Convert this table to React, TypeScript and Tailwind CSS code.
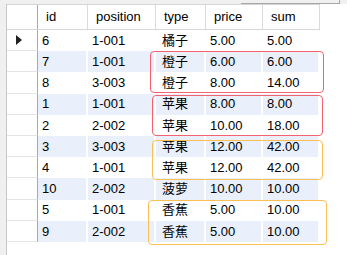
import React from "react";

const rows = [
  ["6", "1-001", "橘子", "5.00", "5.00"],
  ["7", "1-001", "橙子", "6.00", "6.00"],
  ["8", "3-003", "橙子", "8.00", "14.00"],
  ["1", "1-001", "苹果", "8.00", "8.00"],
  ["2", "2-002", "苹果", "10.00", "18.00"],
  ["3", "3-003", "苹果", "12.00", "42.00"],
  ["4", "1-001", "苹果", "12.00", "42.00"],
  ["10", "2-002", "菠萝", "10.00", "10.00"],
  ["5", "1-001", "香蕉", "5.00", "10.00"],
  ["9", "2-002", "香蕉", "5.00", "10.00"],
];

const widths = ["w-[50px]", "w-[68px]", "w-[50px]", "w-[57px]", "w-[57px]"];
const headers = ["id", "position", "type", "price", "sum"];

export default function App() {
  return (
    <div
      className="relative w-[347px] h-[255px] bg-white overflow-hidden text-[13px] text-black"
      style={{ fontFamily: '"Liberation Sans", "Noto Sans CJK SC", sans-serif' }}
    >
      <div className="flex h-[4px] bg-[#f0f0f0]">
        <div className="w-[241px]" />
        <div className="w-[99px] h-[4px] border-b border-r border-[#a8a8a8]" />
      </div>
      <div className="flex">
        <div className="w-[7px] h-[251px] bg-[#f0f0f0] border-r border-[#c8c8c8]" />
        <div className="flex flex-col">
          {/* header */}
          <div className="flex h-[26px] border-t border-b border-[#d6d6d6] bg-white">
            <div className="w-[31px] h-full border-r border-[#a8a8a8]" />
            {headers.map((h, i) => (
              <div
                key={h}
                className={`${widths[i]} h-full flex items-center pl-[8px] border-r border-[#dadada]`}
              >
                {h}
              </div>
            ))}
          </div>
          {rows.map((r, ri) => (
            <div key={ri} className="flex h-[21.2px]">
              <div className="w-[31px] h-full border-r border-[#a8a8a8] border-b border-b-[#e4e4e4] flex items-center pl-[9px]">
                {ri === 0 && (
                  <svg width="6" height="10" viewBox="0 0 6 10">
                    <path d="M0 0 L6 5 L0 10 Z" fill="#222" />
                  </svg>
                )}
              </div>
              {r.map((c, ci) => (
                <div
                  key={ci}
                  className={`${widths[ci]} h-full border-r-2 border-white flex items-center ${
                    ci === 2 ? "pl-[6px]" : "pl-[4px]"
                  } ${ri % 2 === 1 ? "bg-[#e9f0fb]" : "bg-white"}`}
                >
                  {c}
                </div>
              ))}
            </div>
          ))}
        </div>
      </div>

      {/* highlight boxes */}
      <div className="absolute left-[150px] top-[50.5px] w-[174px] h-[42.5px] border-[1.5px] border-[#f4616f] rounded-[4px]" />
      <div className="absolute left-[151.5px] top-[94.5px] w-[171px] h-[41px] border-[1.5px] border-[#f4616f] rounded-[4px]" />
      <div className="absolute left-[151.5px] top-[139.5px] w-[171.5px] h-[40.5px] border-[1.5px] border-[#fbbf52] rounded-[4px]" />
      <div className="absolute left-[148px] top-[200px] w-[179px] h-[44.5px] border-[1.5px] border-[#fbbf52] rounded-[4px]" />
    </div>
  );
}
